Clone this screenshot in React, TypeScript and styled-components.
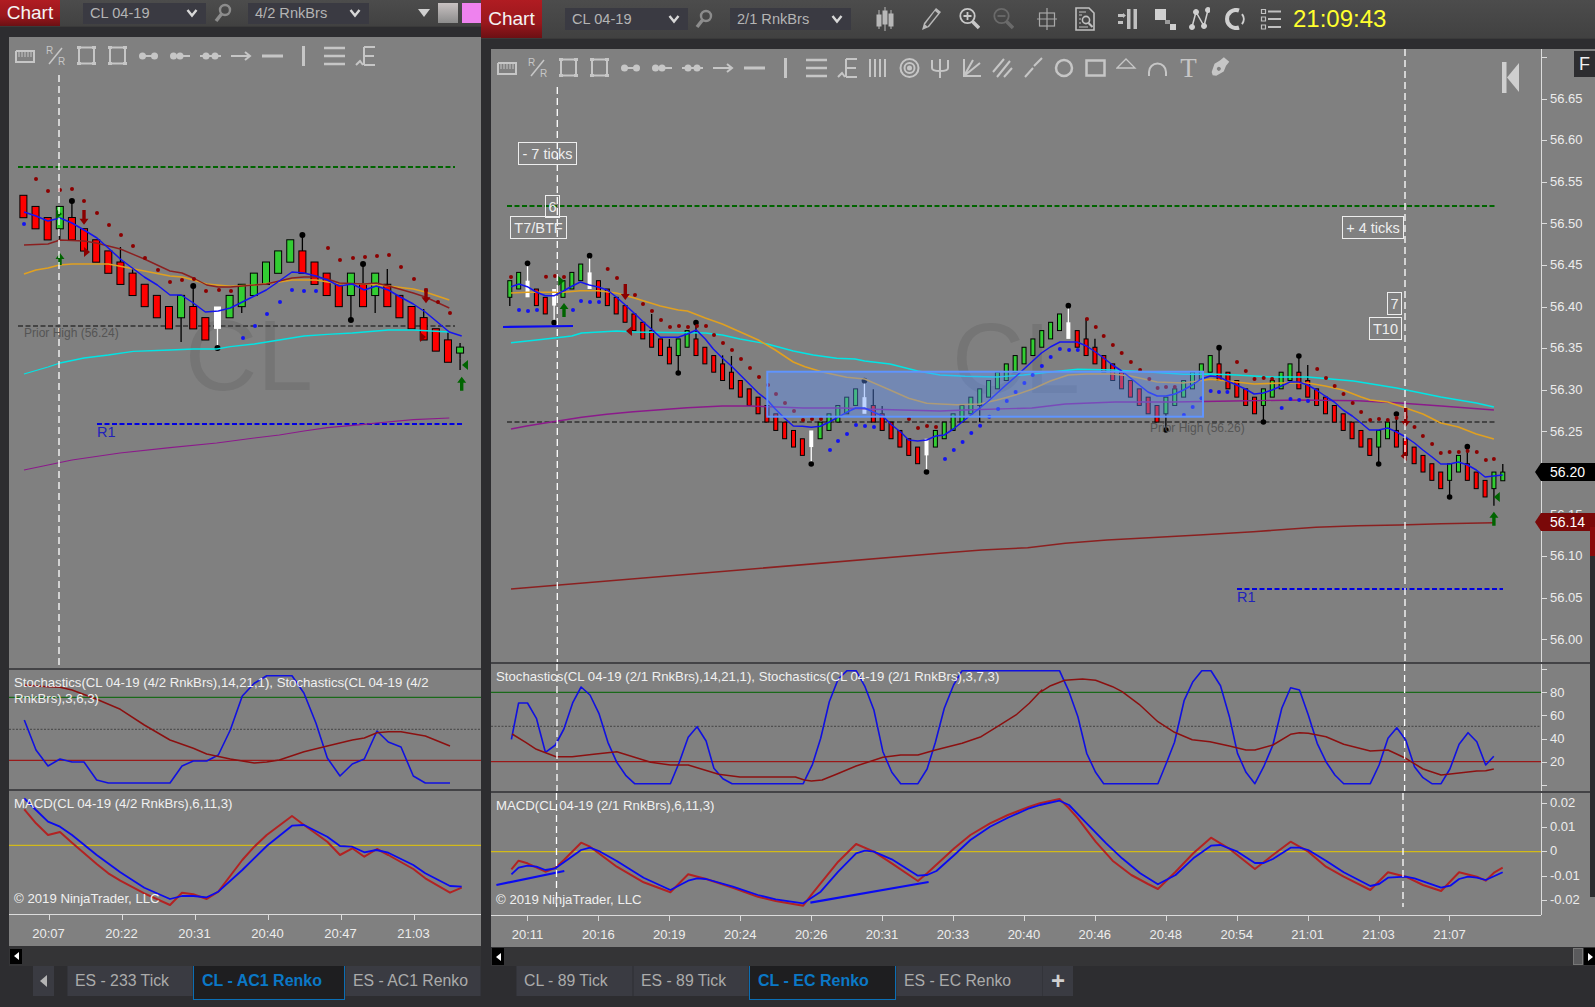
import React from 'react';
import styled, { createGlobalStyle } from 'styled-components';

const GlobalStyle = createGlobalStyle`
  html, body { margin: 0; padding: 0; background: #2d2d30; }
  body { font-family: "Liberation Sans", Arial, sans-serif; }
`;

/* ---------- chart data (all x/y are page pixels) ---------- */

// zoomed crops were read at different scales, this puts them back on the page
const pts = (flat: number[], ox: number, oy: number, sx: number) => {
  const out: string[] = [];
  for (let i = 0; i < flat.length; i += 2) {
    out.push(`${(ox + flat[i] / sx).toFixed(1)},${(oy + flat[i + 1] / 3).toFixed(1)}`);
  }
  return out;
};
const L = (f: number[]) => pts(f, 0, 150, 3);
const LS = (f: number[]) => pts(f, 0, 660, 3);
const R4 = (f: number[]) => pts(f, 490, 130, 3);
const R5 = (f: number[]) => pts(f, 940, 280, 2.394);
const R7 = (f: number[]) => pts(f, 490, 655, 2.8);
const R8 = (f: number[]) => pts(f, 1040, 655, 2.825);
const dotPts = (list: string[]) => list.map((p) => p.split(',').map(Number));

type Wick = [number, number, boolean?];
type CandleSet = {
  tops: number[];
  kinds: string;
  x: (i: number) => number;
  y: (t: number) => number;
  bodyH: number;
  halfW: number;
  wicks: Wick[];
  lastH: number;
  dotR: number;
};

const leftCandles: CandleSet = {
  tops: [0, 1, 2, 1, 2, 3, 4, 5, 6, 7, 8, 9, 10, 9, 10, 11, 10, 9, 8, 7, 6, 5, 4, 5, 6, 7, 8, 7, 8, 7, 8, 9, 10, 11, 12, 13, 13.65],
  kinds: 'rrrgrrrrrrrrrgrrwggggggrrrrgrgrrrrrrg',
  x: (i) => 23.4 + 12.13 * i,
  y: (t) => 195.3 + 11.12 * t,
  bodyH: 22.4,
  halfW: 3.5,
  lastH: 6,
  dotR: 3,
  wicks: [
    [3, 240], [4, 201, true], [8, 247], [9, 268], [13, 342], [14, 286, true], [16, 348, true], [18, 313],
    [23, 235, true], [27, 320, true], [28, 264, true], [29, 313], [30, 269], [33, 309], [35, 332], [36, 343], [36, 370],
  ],
};

const y4 = (v: number) => 130 + v / 3;
const y5 = (v: number) => 280 + v / 3;

const rightCandles: CandleSet = {
  tops: [
    0, -1, 0, 1, 2, 1, 0, -1, -2, -1, 0, 1, 2, 3, 4, 5, 6, 7, 8, 7, 6, 7, 8, 9, 10, 11, 12, 13, 14, 15, 16, 17, 18, 19, 18, 17, 16, 15, 14, 13,
    14, 15, 16, 17, 18, 19, 20, 19, 18, 17, 16, 15, 14, 13, 12, 11, 10, 9, 8, 7, 6, 5, 4, 5, 6, 7, 8, 9, 10, 11, 12, 13, 14, 15, 14, 13, 12, 11, 10, 9,
    10, 11, 12, 13, 14, 13, 12, 11, 10, 11, 12, 13, 14, 15, 16, 17, 18, 19, 18, 17, 18, 19, 20, 21, 22, 23, 22, 21, 22, 23, 24, 23, 23,
  ],
  kinds:
    'ggwrrwgggw' + 'r'.repeat(9) + 'gg' + 'r'.repeat(13) + 'wgggggwrrrrrrwg' + 'g'.repeat(14) + 'w' + 'r'.repeat(10) + 'g'.repeat(6) +
    'r'.repeat(5) + 'g'.repeat(4) + 'r'.repeat(9) + 'gg' + 'r'.repeat(6) + 'gg' + 'rrr' + 'gg',
  x: (i) => 509.8 + 8.866 * i,
  y: (t) => 280.7 + 8.32 * t,
  bodyH: 16.6,
  halfW: 2,
  lastH: 8.7,
  dotR: 2.8,
  wicks: [
    [0, y4(528)], [2, y4(400), true], [5, y4(578), true], [9, y4(377), true], [16, y4(552)], [18, y4(627)], [19, y4(729), true],
    [21, y4(578), true], [24, y4(676)], [25, y4(678)], [34, y4(1002), true], [40, y4(752), true], [41, y4(778)], [42, y4(828)], [47, y4(1026), true],
    [53, y5(426)], [63, y5(77), true], [65, y5(115)], [66, y5(176)], [74, y5(450), true], [80, y5(203), true], [85, y5(426), true],
    [89, y5(228), true], [90, y5(255)], [98, y5(552), true], [100, y5(402), true], [106, y5(651), true], [108, y5(500), true], [111, y5(677)], [112, y5(552)],
  ],
};

const leftLines = {
  blue: L([72, 186, 108, 198, 144, 213, 180, 204, 216, 219, 252, 240, 291, 264, 325, 294, 361, 327, 397, 354, 433, 381, 472, 405, 510, 435, 544, 435, 580, 459, 616, 486, 655, 483, 691, 474, 727, 456, 763, 438, 799, 420, 838, 393, 876, 366, 912, 369, 948, 378, 982, 390, 1018, 408, 1057, 402, 1093, 420, 1129, 408, 1165, 420, 1201, 441, 1240, 462, 1276, 486, 1312, 516, 1348, 546, 1385, 558]),
  maroon: L([72, 285, 144, 282, 180, 270, 252, 273, 289, 279, 361, 297, 433, 327, 510, 363, 546, 369, 580, 384, 620, 405, 655, 411, 691, 411, 727, 408, 799, 402, 838, 393, 876, 384, 912, 381, 948, 381, 982, 387, 1018, 399, 1093, 402, 1129, 399, 1165, 408, 1240, 429, 1276, 441, 1348, 474]),
  orange: L([72, 372, 108, 360, 144, 354, 178, 345, 216, 342, 325, 342, 361, 349, 433, 363, 510, 378, 546, 381, 580, 390, 620, 402, 691, 409, 763, 405, 838, 396, 876, 390, 948, 390, 1018, 402, 1093, 402, 1165, 408, 1240, 417, 1276, 426, 1348, 450]),
  cyan: L([72, 672, 144, 651, 180, 639, 252, 624, 325, 615, 400, 604, 510, 600, 580, 597, 650, 597, 691, 590, 763, 582, 838, 570, 912, 558, 982, 553, 1057, 549, 1129, 543, 1165, 540, 1240, 540, 1348, 546]),
  purple: L([72, 960, 144, 945, 216, 930, 360, 909, 510, 893, 650, 879, 763, 864, 838, 855, 912, 843, 982, 833, 1093, 823, 1129, 819, 1240, 809, 1348, 804]),
  redDots: L([108, 87, 144, 123, 180, 120, 216, 117, 252, 153, 291, 189, 327, 225, 363, 255, 399, 288, 435, 324, 474, 360, 510, 396, 546, 390, 582, 387, 618, 423, 657, 420, 693, 423, 984, 294, 1020, 330, 1059, 324, 1095, 321, 1131, 318, 1167, 315, 1203, 351, 1242, 387, 1278, 421, 1314, 456, 1350, 489]),
  blueDots: L([72, 222, 729, 564, 765, 528, 801, 492, 840, 456, 876, 420, 912, 423, 948, 423]),
};

const rightLines = {
  blue: [
    ...R4([63, 470, 87, 462, 112, 470, 139, 486, 166, 497, 193, 497, 220, 483, 247, 468, 271, 456, 298, 465, 325, 471, 352, 480, 379, 501, 406, 525, 433, 550, 457, 573, 484, 597, 511, 622, 565, 622, 592, 612, 619, 600, 646, 627, 670, 657, 697, 684, 724, 708, 751, 735, 778, 762, 805, 789, 832, 810, 856, 837, 883, 864, 910, 888, 937, 889, 964, 892, 991, 889, 1018, 876, 1043, 862, 1070, 847, 1097, 834, 1124, 834, 1151, 847, 1178, 858, 1205, 885, 1232, 906, 1256, 930, 1283, 933, 1310, 930, 1337, 918]),
    ...R5([10, 465, 32, 447, 53, 426, 74, 405, 95, 384, 116, 363, 137, 339, 158, 315, 180, 291, 201, 267, 222, 243, 243, 219, 264, 201, 287, 186, 307, 186, 328, 186, 351, 198, 372, 216, 392, 234, 413, 255, 435, 273, 456, 294, 477, 315, 498, 336, 520, 348, 541, 348, 562, 342, 583, 330, 604, 315, 625, 297, 647, 288, 668, 291, 688, 303, 710, 315, 731, 327, 752, 342, 774, 339, 795, 330, 817, 318, 838, 306, 859, 306, 880, 315, 901, 330, 922, 348, 944, 366, 965, 390, 987, 408, 1008, 429, 1028, 450, 1050, 450, 1072, 444, 1093, 456, 1115, 471, 1136, 489, 1156, 510, 1178, 531, 1199, 552, 1220, 552, 1241, 546, 1263, 555, 1284, 570, 1305, 591, 1325, 588, 1347, 585]),
  ],
  orange: [
    ...R4([63, 489, 112, 487, 220, 487, 271, 482, 325, 482, 379, 489, 433, 504, 511, 528, 565, 540, 592, 543, 646, 564, 697, 582, 751, 606, 805, 630, 856, 660, 910, 696, 945, 710, 1000, 727, 1070, 742, 1124, 747, 1200, 780, 1256, 805, 1310, 820]),
    ...R5([0, 372, 40, 374, 95, 372, 137, 360, 180, 345, 222, 327, 264, 303, 307, 285, 351, 282, 413, 282, 456, 288, 520, 306, 583, 309, 647, 298, 688, 303, 752, 312, 817, 309, 880, 309, 922, 318, 965, 330, 1008, 351, 1030, 360, 1072, 366, 1115, 384, 1156, 402, 1199, 429, 1241, 441, 1284, 462, 1326, 477]),
  ],
  cyan: [
    ...R4([63, 638, 140, 630, 220, 621, 245, 618, 275, 609, 380, 603, 430, 606, 646, 609, 697, 615, 750, 627, 832, 642, 910, 663, 970, 675, 1040, 685, 1095, 687, 1124, 693, 1200, 702, 1283, 723]),
    ...R5([0, 285, 60, 289, 137, 291, 200, 285, 264, 276, 330, 268, 413, 270, 500, 276, 583, 283, 647, 282, 710, 285, 795, 291, 880, 291, 990, 303, 1093, 324, 1199, 351, 1284, 369, 1326, 381]),
  ],
  purple: [
    ...R4([63, 897, 110, 888, 165, 879, 275, 862, 350, 853, 430, 845, 592, 833, 697, 828, 780, 828, 860, 831, 940, 834, 1060, 834, 1150, 838]),
    ...R5([0, 393, 60, 390, 220, 384, 300, 372, 420, 366, 560, 366, 700, 363, 860, 360, 1000, 362, 1100, 369, 1200, 378, 1326, 390]),
  ],
  maroon: ['511,589', ...R5([0, 820, 100, 810, 210, 803, 300, 790, 400, 780, 500, 773, 620, 765, 750, 755, 900, 742, 1000, 737, 1100, 735, 1200, 731, 1326, 728])],
  redDots: [
    ...R4([63, 441, 168, 440, 195, 438, 222, 441, 353, 417, 381, 444, 435, 495, 459, 522, 486, 543, 513, 570, 540, 591, 567, 588, 594, 591, 621, 588, 648, 588, 672, 615, 699, 639, 726, 660, 753, 687, 780, 714, 807, 741, 834, 765, 858, 792, 885, 819, 912, 843, 939, 870, 966, 867, 993, 867, 1257, 867, 1284, 894, 1311, 888, 1338, 891]),
    ...R5([352, 117, 373, 141, 392, 168, 414, 195, 435, 219, 457, 246, 479, 270, 501, 297, 521, 324, 541, 321, 562, 321, 711, 246, 732, 273, 753, 297, 775, 294, 795, 297, 903, 267, 924, 294, 945, 318, 966, 342, 988, 369, 1008, 396, 1030, 420, 1051, 417, 1072, 420, 1093, 414, 1115, 411, 1136, 441, 1156, 468, 1178, 492, 1199, 519, 1220, 516, 1242, 516, 1263, 513, 1285, 516, 1307, 540, 1326, 537]),
  ],
  blueDots: [
    ...R4([87, 540, 114, 543, 141, 540, 249, 540, 273, 513, 300, 516, 327, 516, 1020, 960, 1044, 933, 1071, 912, 1098, 885, 1125, 888, 1152, 891]),
    ...R5([12, 537, 33, 510, 54, 486, 75, 459, 96, 437, 118, 410, 139, 387, 160, 363, 181, 336, 202, 309, 222, 285, 244, 258, 265, 231, 287, 207, 309, 210, 330, 210, 584, 405, 605, 381, 626, 355, 648, 333, 668, 336, 688, 336, 818, 384, 839, 357, 860, 360, 881, 363]),
  ],
};

const leftStoch = {
  blue: LS([73, 180, 108, 270, 144, 318, 180, 297, 216, 306, 252, 306, 290, 360, 325, 369, 510, 369, 546, 318, 580, 303, 620, 303, 655, 285, 691, 210, 727, 108, 763, 70, 800, 47, 876, 47, 912, 100, 948, 190, 982, 294, 1020, 348, 1057, 312, 1093, 297, 1131, 213, 1165, 246, 1203, 261, 1240, 348, 1276, 369, 1350, 369]),
  maroon: LS([73, 75, 144, 80, 180, 82, 216, 90, 290, 118, 361, 148, 433, 195, 510, 240, 580, 265, 620, 282, 691, 297, 763, 309, 800, 306, 838, 300, 912, 275, 982, 258, 1057, 240, 1093, 234, 1131, 218, 1165, 215, 1203, 215, 1276, 228, 1350, 258]),
};
const leftMacd = {
  red: LS([73, 448, 108, 490, 144, 525, 180, 516, 216, 548, 290, 612, 325, 640, 361, 662, 433, 700, 510, 735, 546, 698, 580, 703, 620, 717, 655, 695, 727, 600, 763, 560, 800, 525, 876, 468, 912, 495, 982, 545, 1020, 585, 1057, 565, 1093, 590, 1131, 567, 1165, 585, 1240, 627, 1276, 655, 1350, 698, 1385, 683]),
  blue: LS([73, 415, 108, 450, 144, 485, 180, 500, 216, 525, 290, 585, 361, 637, 433, 683, 510, 717, 546, 708, 580, 708, 620, 712, 655, 695, 727, 630, 800, 558, 876, 497, 912, 495, 982, 530, 1020, 558, 1057, 560, 1093, 577, 1129, 570, 1165, 578, 1240, 615, 1276, 640, 1350, 678, 1385, 680]),
};
const rightStoch = {
  blue: [
    ...R7([60, 253, 80, 144, 105, 144, 130, 190, 155, 292, 183, 270, 207, 222, 232, 142, 255, 96, 280, 120, 305, 175, 330, 262, 355, 322, 380, 361, 405, 386, 505, 386, 530, 322, 555, 247, 580, 215, 605, 258, 627, 340, 652, 371, 678, 386, 877, 386, 903, 328, 926, 250, 950, 140, 975, 72, 1000, 47, 1025, 47, 1050, 95, 1075, 165, 1100, 290, 1125, 352, 1150, 386, 1198, 386, 1224, 342, 1247, 262, 1272, 160, 1298, 90, 1322, 47]),
    ...R8([55, 47, 82, 110, 107, 185, 132, 295, 157, 352, 180, 386, 333, 386, 358, 322, 380, 262, 407, 137, 432, 80, 457, 47, 483, 47, 510, 92, 535, 185, 558, 295, 582, 352, 607, 386, 632, 335, 658, 270, 683, 160, 708, 98, 733, 105, 758, 180, 783, 265, 808, 320, 833, 360, 858, 386, 933, 386, 958, 330, 983, 250, 1008, 218, 1033, 255, 1058, 335, 1082, 368, 1107, 386, 1133, 386, 1158, 342, 1184, 268, 1209, 233, 1234, 260, 1259, 330, 1282, 304]),
  ],
  maroon: [
    ...R7([62, 237, 100, 262, 130, 283, 185, 305, 230, 305, 290, 298, 355, 290, 450, 322, 505, 330, 555, 330, 640, 358, 700, 366, 855, 366, 880, 375, 900, 378, 930, 375, 970, 358, 1025, 333, 1100, 307, 1150, 300, 1198, 300, 1247, 285, 1322, 265, 1375, 245, 1425, 212, 1475, 178, 1510, 145, 1545, 105]),
    ...R8([0, 112, 30, 92, 70, 76, 120, 72, 157, 76, 205, 95, 232, 110, 280, 148, 333, 200, 380, 232, 430, 254, 480, 260, 535, 273, 582, 285, 607, 285, 658, 270, 708, 238, 733, 233, 758, 235, 808, 245, 858, 268, 933, 288, 983, 285, 1033, 310, 1082, 342, 1133, 360, 1159, 357, 1234, 348, 1259, 347, 1282, 342]),
  ],
};
const rightMacd = {
  red: [
    ...R7([60, 643, 80, 617, 105, 625, 155, 650, 183, 638, 207, 615, 255, 563, 280, 575, 355, 635, 430, 682, 505, 712, 555, 658, 605, 672, 680, 698, 750, 725, 800, 738, 877, 752, 903, 715, 975, 620, 1025, 567, 1075, 590, 1125, 625, 1198, 678, 1224, 655, 1300, 580, 1345, 540, 1400, 505, 1450, 480, 1510, 455]),
    ...R8([0, 445, 55, 432, 82, 460, 107, 490, 157, 560, 205, 617, 258, 660, 305, 687, 333, 702, 383, 650, 433, 595, 483, 548, 533, 580, 607, 642, 658, 600, 708, 560, 758, 590, 808, 635, 858, 665, 933, 705, 983, 652, 1033, 665, 1082, 690, 1133, 708, 1184, 652, 1234, 665, 1259, 677, 1284, 652, 1307, 638]),
  ],
  blue: [
    ...R7([60, 658, 80, 638, 105, 632, 130, 635, 155, 645, 183, 640, 207, 622, 255, 585, 280, 578, 305, 588, 355, 618, 430, 668, 505, 705, 555, 677, 580, 670, 605, 672, 680, 695, 750, 720, 800, 733, 877, 745, 926, 710, 975, 650, 1025, 595, 1050, 587, 1075, 590, 1125, 613, 1198, 662, 1224, 660, 1250, 648, 1300, 600, 1345, 555, 1400, 515, 1450, 488, 1510, 460]),
    ...R8([0, 450, 55, 437, 82, 450, 132, 505, 187, 565, 232, 610, 283, 655, 333, 688, 383, 660, 433, 610, 483, 572, 510, 570, 558, 590, 607, 624, 632, 624, 658, 612, 708, 578, 733, 578, 758, 585, 808, 617, 858, 652, 933, 693, 958, 687, 983, 668, 1033, 665, 1058, 670, 1133, 698, 1159, 692, 1184, 672, 1209, 665, 1234, 668, 1259, 675, 1307, 652]),
  ],
};

/* ---------- layout ---------- */

const Page = styled.div`
  display: flex;
  width: 1595px;
  height: 1007px;
  overflow: hidden;
  background: #2d2d30;
`;

const ChartWindow = styled.div<{ $w: number }>`
  display: flex;
  flex-direction: column;
  flex: 0 0 ${(p) => p.$w}px;
  min-width: 0;
`;

const TitleBar = styled.div<{ $h: number; $gap: number }>`
  display: flex;
  align-items: center;
  flex: 0 0 auto;
  height: ${(p) => p.$h}px;
  margin-bottom: ${(p) => p.$gap}px;
  background: linear-gradient(#4c4c4c, #414141);
  border-bottom: 1px solid #3a3a3a;
  box-sizing: border-box;
  overflow: hidden;
`;

const ChartButton = styled.div<{ $w: number; $ml: number }>`
  display: flex;
  align-items: center;
  justify-content: center;
  flex: 0 0 ${(p) => p.$w}px;
  height: 100%;
  margin-right: ${(p) => p.$ml}px;
  background: linear-gradient(#b01c22, #9a171c 60%, #6c1014);
  color: #f4f4f4;
  font-size: 19px;
`;

const SymbolSelect = styled.div<{ $w: number; $h: number }>`
  display: flex;
  align-items: center;
  justify-content: space-between;
  flex: 0 0 ${(p) => p.$w}px;
  height: ${(p) => p.$h}px;
  padding: 0 8px 0 7px;
  box-sizing: border-box;
  background: #3a3a42;
  color: #b4b4b4;
  font-size: 14.6px;
`;

const TitleIcon = styled.svg<{ $ml?: number; $mr?: number }>`
  flex: 0 0 auto;
  margin-left: ${(p) => p.$ml ?? 0}px;
  margin-right: ${(p) => p.$mr ?? 0}px;
`;

const Swatch = styled.div<{ $bg: string; $ml: number; $w: number }>`
  flex: 0 0 ${(p) => p.$w}px;
  height: 20px;
  margin-left: ${(p) => p.$ml}px;
  background: ${(p) => p.$bg};
`;

const Clock = styled.div`
  margin-left: 12px;
  color: #ffff2e;
  font-size: 24px;
`;

const ChartStack = styled.div<{ $ml: number }>`
  position: relative;
  display: flex;
  flex-direction: column;
  margin-left: ${(p) => p.$ml}px;
`;

const Pane = styled.div<{ $h: number }>`
  position: relative;
  display: flex;
  flex: 0 0 ${(p) => p.$h}px;
  height: ${(p) => p.$h}px;
  background: #808080;
  overflow: hidden;
`;

const Separator = styled.div`
  flex: 0 0 2px;
  background: #434346;
`;

const Plot = styled.div`
  position: relative;
  flex: 1;
  min-width: 0;
`;

const ChartSvg = styled.svg`
  position: relative;
  z-index: 1;
  display: block;
`;

const Watermark = styled.div<{ $x: number; $y: number }>`
  position: absolute;
  left: ${(p) => p.$x}px;
  top: ${(p) => p.$y}px;
  font-size: 100px;
  line-height: 100px;
  color: #757575;
`;

const Tag = styled.div<{ $x: number; $y: number; $w: number }>`
  position: absolute;
  z-index: 2;
  left: ${(p) => p.$x}px;
  top: ${(p) => p.$y}px;
  width: ${(p) => p.$w}px;
  height: 23px;
  box-sizing: border-box;
  border: 1px solid #eeeeee;
  color: #eeeeee;
  font-size: 14.5px;
  line-height: 22px;
  text-align: center;
  white-space: nowrap;
`;

const ChartNote = styled.div<{ $x: number; $y: number; $c: string; $size: number }>`
  position: absolute;
  z-index: 2;
  left: ${(p) => p.$x}px;
  top: ${(p) => p.$y}px;
  color: ${(p) => p.$c};
  font-size: ${(p) => p.$size}px;
  line-height: 16px;
  white-space: nowrap;
`;

const Legend = styled.div<{ $y: number; $w?: number }>`
  position: absolute;
  z-index: 2;
  left: 5px;
  top: ${(p) => p.$y}px;
  width: ${(p) => (p.$w ? `${p.$w}px` : 'auto')};
  color: #f0f0f0;
  font-size: 13.2px;
  line-height: 16px;
  white-space: ${(p) => (p.$w ? 'normal' : 'nowrap')};
`;

const Toolbar = styled.div`
  position: absolute;
  z-index: 2;
  top: 8px;
  left: 5px;
  display: flex;
  gap: 10px;
`;

const ToolIcon = styled.svg`
  display: block;
  flex: 0 0 21px;
  fill: none;
  stroke: #c6c6c6;
  stroke-width: 2;
`;

const ToolGlyph = styled.div`
  flex: 0 0 21px;
  width: 21px;
  height: 21px;
  color: #c6c6c6;
  font-family: "Liberation Serif", serif;
  font-size: 27px;
  line-height: 22px;
  text-align: center;
`;

const CollapseIcon = styled.svg`
  position: absolute;
  z-index: 2;
  left: 1011px;
  top: 13px;
`;

const ValueAxis = styled.div`
  position: relative;
  z-index: 1;
  display: flex;
  flex-direction: column;
  flex: 0 0 54px;
  box-sizing: border-box;
  border-left: 1px solid #dcdcdc;
`;

const AxisRow = styled.div<{ $h: number; $mt?: number }>`
  position: relative;
  flex: 0 0 ${(p) => p.$h}px;
  margin-top: ${(p) => p.$mt ?? 0}px;
  padding-left: 8px;
  color: #ececec;
  font-size: 13px;
  line-height: ${(p) => p.$h}px;
  &::before {
    content: '';
    position: absolute;
    left: 0;
    top: 50%;
    width: 5px;
    height: 1px;
    background: #dcdcdc;
  }
`;

const PriceFlag = styled.div<{ $bg: string; $y: number }>`
  position: absolute;
  z-index: 3;
  right: 0;
  top: ${(p) => p.$y}px;
  width: 60px;
  height: 18px;
  padding-left: 15px;
  box-sizing: border-box;
  background: ${(p) => p.$bg};
  color: #ffffff;
  font-size: 14px;
  line-height: 18px;
  clip-path: polygon(0 50%, 6px 0, 100% 0, 100% 100%, 6px 100%);
`;

const FButton = styled.div`
  position: absolute;
  z-index: 3;
  right: 0;
  top: 2px;
  width: 21px;
  height: 26px;
  background: #2d2d30;
  color: #f0f0f0;
  font-size: 18px;
  line-height: 26px;
  text-align: center;
`;

const RightStrip = styled.div`
  position: absolute;
  z-index: 4;
  right: 0;
  top: 478px;
  width: 5px;
  height: 370px;
  background: linear-gradient(#8a0a0a 0, #8a0a0a 29px, #2d2d30 29px);
`;

const TimeRow = styled.div<{ $h: number }>`
  display: flex;
  flex: 0 0 ${(p) => p.$h}px;
  height: ${(p) => p.$h}px;
  background: #808080;
`;

const TimeAxis = styled.div<{ $pad: number }>`
  display: flex;
  flex: 1;
  min-width: 0;
  box-sizing: border-box;
  border-top: 1px solid #dcdcdc;
  padding-left: ${(p) => p.$pad}px;
  overflow: hidden;
`;

const TimeCell = styled.div<{ $w: number }>`
  position: relative;
  flex: 0 0 ${(p) => p.$w}px;
  padding-top: 11px;
  color: #ececec;
  font-size: 13px;
  line-height: 16px;
  text-align: center;
  &::before {
    content: '';
    position: absolute;
    left: 50%;
    top: 0;
    width: 1px;
    height: 5px;
    background: #dcdcdc;
  }
`;

const AxisCorner = styled.div`
  flex: 0 0 54px;
`;

const ScrollRow = styled.div<{ $h: number }>`
  display: flex;
  justify-content: space-between;
  align-items: center;
  height: ${(p) => p.$h}px;
  background: #343436;
`;

const ScrollEnd = styled.div<{ $w: number; $dir: 'left' | 'right'; $h: number }>`
  position: relative;
  flex: 0 0 ${(p) => p.$w}px;
  height: ${(p) => p.$h}px;
  margin-left: 1px;
  background: #000000;
  &::after {
    content: '';
    position: absolute;
    top: calc(50% - 4px);
    left: calc(50% - 2px);
    border: 4px solid transparent;
    border-left-width: ${(p) => (p.$dir === 'right' ? 5 : 0)}px;
    border-right-width: ${(p) => (p.$dir === 'left' ? 5 : 0)}px;
    border-left-color: #ffffff;
    border-right-color: #ffffff;
  }
`;

const ScrollThumb = styled.div`
  flex: 0 0 10px;
  height: 17px;
  margin-left: auto;
  background: #5a5a5c;
  border: 1px solid #777;
  box-sizing: border-box;
`;

const TabStrip = styled.div<{ $pad: number }>`
  display: flex;
  align-items: flex-start;
  padding-left: ${(p) => p.$pad}px;
  overflow: hidden;
`;

const Tab = styled.div<{ $w: number; $active?: boolean }>`
  flex: 0 0 ${(p) => p.$w}px;
  height: ${(p) => (p.$active ? 34 : 30)}px;
  box-sizing: border-box;
  padding-left: ${(p) => (p.$active ? 8 : 7)}px;
  font-size: ${(p) => (p.$active ? 16 : 15.8)}px;
  font-weight: ${(p) => (p.$active ? 700 : 400)};
  line-height: 30px;
  white-space: nowrap;
  overflow: hidden;
  background: ${(p) => (p.$active ? '#1e1e20' : '#3a3b42')};
  color: ${(p) => (p.$active ? '#0b78c6' : '#ababab')};
  border-left: 1px solid ${(p) => (p.$active ? '#0b6eb4' : '#33343a')};
  border-right: 1px solid ${(p) => (p.$active ? '#0b6eb4' : '#33343a')};
  border-bottom: ${(p) => (p.$active ? '1px solid #0b6eb4' : 'none')};
`;

const TabButton = styled.div<{ $w: number; $mr: number }>`
  display: flex;
  align-items: center;
  justify-content: center;
  flex: 0 0 ${(p) => p.$w}px;
  height: 30px;
  margin-right: ${(p) => p.$mr}px;
  background: #3a3b42;
  color: #d0d0d0;
  font-size: 24px;
  font-weight: 700;
`;

const LeftCaret = styled.div`
  border: 6px solid transparent;
  border-left: 0;
  border-right: 7px solid #b4b4b4;
`;

const Trace = styled.polyline<{ $c: string; $w: number }>`
  fill: none;
  stroke: ${(p) => p.$c};
  stroke-width: ${(p) => p.$w}px;
  stroke-linejoin: round;
`;

const GuideLine = styled.line<{ $c: string; $w: number; $dash?: string }>`
  stroke: ${(p) => p.$c};
  stroke-width: ${(p) => p.$w}px;
  stroke-dasharray: ${(p) => p.$dash ?? 'none'};
`;

const Zone = styled.rect`
  fill: rgba(95, 148, 255, 0.4);
  stroke: #5f94ff;
  stroke-width: 2px;
`;

/* ---------- drawing helpers ---------- */

const Candles: React.FC<{ set: CandleSet }> = ({ set }) => {
  const last = set.tops.length - 1;
  const colour = (k: string) => (k === 'r' ? '#ff0000' : k === 'g' ? '#32cd32' : '#ffffff');
  return (
    <g>
      {set.wicks.map(([i, end, dot], n) => {
        const top = set.y(set.tops[i]);
        const x = set.x(i);
        return (
          <g key={n}>
            <line x1={x} x2={x} y1={top + set.bodyH / 2} y2={end} stroke={set.kinds[i] === 'w' ? '#ffffff' : '#000000'} strokeWidth={1.3} />
            {dot && <circle cx={x} cy={end} r={set.dotR} fill="#000000" />}
          </g>
        );
      })}
      {set.tops.map((t, i) => (
        <rect
          key={i}
          x={set.x(i) - set.halfW}
          y={set.y(t)}
          width={set.halfW * 2}
          height={i === last ? set.lastH : set.bodyH}
          fill={colour(set.kinds[i])}
          stroke={set.kinds[i] === 'w' ? 'none' : '#000000'}
          strokeWidth={1}
        />
      ))}
    </g>
  );
};

const Dots: React.FC<{ list: string[]; c: string; r: number }> = ({ list, c, r }) => (
  <g fill={c}>
    {dotPts(list).map(([x, y], i) => (
      <circle key={i} cx={x} cy={y} r={r} />
    ))}
  </g>
);

const Arrow: React.FC<{ x: number; tail: number; tip: number; c: string }> = ({ x, tail, tip, c }) => {
  const d = tip > tail ? -1 : 1;
  const neck = tip + d * 6;
  return <polygon fill={c} points={`${x},${tip} ${x + 4.5},${neck} ${x + 1.7},${neck} ${x + 1.7},${tail} ${x - 1.7},${tail} ${x - 1.7},${neck} ${x - 4.5},${neck}`} />;
};

const Wedge: React.FC<{ x: number; y: number; c: string; dir: 1 | -1 }> = ({ x, y, c, dir }) => (
  <polygon fill={c} points={`${x + dir * 3},${y} ${x - dir * 3},${y - 5} ${x - dir * 3},${y + 5}`} />
);

const tools: React.ReactNode[] = [
  <g key="ruler"><path d="M2 6v11h18V6H2" /><path strokeWidth="1" d="M5 7v5M8 7v5M11 7v5M14 7v5M17 7v5" /></g>,
  <g key="rr"><path strokeWidth="1.5" d="M17 3L4 19" /><text x="1" y="9" fontSize="10" fill="#c6c6c6" stroke="none" fontFamily="Liberation Sans">R</text><text x="13" y="20" fontSize="10" fill="#c6c6c6" stroke="none" fontFamily="Liberation Sans">R</text></g>,
  <g key="box"><rect x="3" y="2.5" width="15" height="16" /><path fill="#c6c6c6" stroke="none" d="M1 1h4v3H1zM16 1h4v3h-4zM1 17h4v3H1zM16 17h4v3h-4z" /></g>,
  <g key="box2"><rect x="3" y="2.5" width="15" height="16" /><path fill="#c6c6c6" stroke="none" d="M1 1h4v3H1zM16 1h4v3h-4zM1 17h4v3H1zM16 17h4v3h-4z" /></g>,
  <g key="seg"><circle cx="4.5" cy="11" r="3.5" fill="#c6c6c6" stroke="none" /><circle cx="16.5" cy="11" r="3.5" fill="#c6c6c6" stroke="none" /><path d="M4 11h13" /></g>,
  <g key="ray"><circle cx="4.5" cy="11" r="3.5" fill="#c6c6c6" stroke="none" /><circle cx="11" cy="11" r="3.5" fill="#c6c6c6" stroke="none" /><path d="M4 11h17" /></g>,
  <g key="ext"><circle cx="6" cy="11" r="3.5" fill="#c6c6c6" stroke="none" /><circle cx="15" cy="11" r="3.5" fill="#c6c6c6" stroke="none" /><path d="M0 11h21" /></g>,
  <g key="arrow"><path d="M0 11h19M14 7l5 4-5 4" /></g>,
  <path key="hline" strokeWidth="3" d="M0 11h21" />,
  <path key="vline" strokeWidth="3" d="M10.5 1v20" />,
  <path key="bars" strokeWidth="2.5" d="M0 3h21M0 11h21M0 19h21" />,
  <g key="fib"><path d="M9 2v18M9 2h11M9 11h10M9 20h11" /><path d="M1 20l4-4 3 4" /></g>,
  <path key="cycles" strokeWidth="2" d="M2 2v18M7 2v18M12 2v18M17 2v18" />,
  <g key="target"><circle cx="10.5" cy="11" r="9" /><circle cx="10.5" cy="11" r="5" /><circle cx="10.5" cy="11" r="1.5" fill="#c6c6c6" /></g>,
  <path key="fork" d="M10 21V2M2 3v8q0 3 8 3t8-3V3" />,
  <path key="fan" d="M3 2v17h17M3 19L19 6M3 19L12 3" />,
  <path key="stripes" d="M1 15L12 2M5 20L18 4M12 20L20 11" />,
  <path key="channel" d="M2 20l8-9M11 9l8-8" />,
  <circle key="ellipse" cx="10" cy="11" r="8" strokeWidth="2.5" />,
  <rect key="rect" x="1.5" y="3.5" width="18" height="15" strokeWidth="2.5" />,
  <path key="tri" strokeWidth="1.3" d="M1 11L10 2l9 9z" />,
  <path key="arc" d="M2 19V15a8.5 8.5 0 0 1 17 0v4" />,
  'T',
  <g key="marker" transform="rotate(40 10.5 11)"><path fill="#c6c6c6" stroke="none" d="M7 0h7v5l2 6-3 8-3 2-3-2-3-8 2-6z" /><circle cx="10.5" cy="12" r="2" fill="#808080" stroke="none" /></g>,
];

const Tools: React.FC<{ count: number }> = ({ count }) => (
  <Toolbar>
    {tools.slice(0, count).map((t, i) =>
      typeof t === 'string' ? (
        <ToolGlyph key={i}>{t}</ToolGlyph>
      ) : (
        <ToolIcon key={i} width={21} height={21} viewBox="0 0 21 21">{t}</ToolIcon>
      ),
    )}
  </Toolbar>
);

const Chevron: React.FC = () => (
  <svg width="12" height="10" viewBox="0 0 12 10"><path d="M1.5 2L6 7.5 10.5 2" fill="none" stroke="#d8d8d8" strokeWidth="2.4" /></svg>
);

const SearchGlass: React.FC<{ ml: number; mr: number }> = ({ ml, mr }) => (
  <TitleIcon $ml={ml} $mr={mr} width="18" height="20" viewBox="0 0 18 20" fill="none" stroke="#8c8c8c">
    <circle cx="11" cy="7" r="5" strokeWidth="2.4" />
    <path d="M7.5 11L2 18" strokeWidth="3.5" />
  </TitleIcon>
);

const MagnifyPlus: React.FC<{ ml: number; c: string; plus?: boolean }> = ({ ml, c, plus }) => (
  <TitleIcon $ml={ml} width="21" height="24" viewBox="0 0 21 24" fill="none" stroke={c}>
    <circle cx="8.5" cy="9" r="7.2" strokeWidth="1.8" />
    <path strokeWidth="1.8" d={plus ? 'M4.5 9h8M8.5 5v8' : 'M4.5 9h8'} />
    <path strokeWidth="3.5" d="M13.5 14.5L20 21" />
  </TitleIcon>
);

const ChartHeaderIcons: React.FC = () => (
  <>
    <TitleIcon $ml={25} width="18" height="26" viewBox="0 0 18 26" fill="#b8b8b8" stroke="#b8b8b8">
      <path d="M3 4v19M9 1v24M15 4v19" strokeWidth="1" />
      <rect x="1" y="9" width="4" height="11" /><rect x="7" y="5" width="4" height="13" /><rect x="13" y="8" width="4" height="12" />
    </TitleIcon>
    <TitleIcon $ml={27} width="21" height="24" viewBox="0 0 21 24" fill="#b8b8b8">
      <path d="M15 1l5 4-12 15-7 3 2-7z" /><path d="M14 4l3 2.5L6.5 19.5l-2.5-2z" fill="#4a4a4a" />
    </TitleIcon>
    <MagnifyPlus ml={17} c="#c8c8c8" plus />
    <MagnifyPlus ml={13} c="#6a6a6a" />
    <TitleIcon $ml={23} width="20" height="22" viewBox="0 0 20 22" fill="none" stroke="#a8a8a8" strokeWidth="1.2">
      <rect x="2.5" y="5" width="15" height="13" /><path d="M10 0v22M0 11h20" />
    </TitleIcon>
    <TitleIcon $ml={17} width="22" height="24" viewBox="0 0 22 24" fill="none" stroke="#c0c0c0" strokeWidth="1.6">
      <path d="M2 1h13l5 5v17H2z" /><path d="M5 5h7M5 8h3M5 12h2M5 16h2M5 20h9" strokeWidth="1.2" /><circle cx="12" cy="13" r="3.6" /><path d="M14.5 16l4 4" strokeWidth="2.2" />
    </TitleIcon>
    <TitleIcon $ml={21} width="21" height="22" viewBox="0 0 21 22" fill="#c0c0c0">
      <rect x="10" y="1" width="3.5" height="20" /><rect x="16.5" y="1" width="3.5" height="20" /><rect x="1" y="6" width="5" height="3" /><rect x="1" y="13" width="5" height="3" /><path d="M6 5l3 2.5L6 10z" />
    </TitleIcon>
    <TitleIcon $ml={17} width="21" height="24" viewBox="0 0 21 24" fill="#d0d0d0">
      <rect x="0" y="2" width="11" height="11" /><rect x="10" y="13" width="5" height="4" fill="#9a9a9a" /><rect x="15" y="17" width="6" height="6" />
    </TitleIcon>
    <TitleIcon $ml={13} width="21" height="24" viewBox="0 0 21 24" fill="#d0d0d0" stroke="#d0d0d0">
      <path d="M3 20L7 5l8 14 4-16" fill="none" strokeWidth="1.5" /><circle cx="3" cy="20" r="2.5" /><circle cx="7" cy="5" r="2.5" /><circle cx="15" cy="19" r="2.5" /><circle cx="19" cy="3" r="2.5" />
    </TitleIcon>
    <TitleIcon $ml={15} width="21" height="22" viewBox="0 0 21 22" fill="none" stroke="#d0d0d0">
      <path d="M14 2.5A9 9 0 1 0 14 19.5" strokeWidth="4" /><path d="M17 6a8 8 0 0 1 0 10" strokeWidth="2" />
    </TitleIcon>
    <TitleIcon $ml={14} width="21" height="24" viewBox="0 0 21 24" fill="none" stroke="#c0c0c0">
      <path d="M1.5 2.5h4v4h-4zM1.5 10h4v4h-4zM1.5 18h4v4h-4z" strokeWidth="1.2" /><path d="M8 4.5h13M8 12h13M8 20h13" strokeWidth="2" />
    </TitleIcon>
  </>
);

const prices = ['56.65', '56.60', '56.55', '56.50', '56.45', '56.40', '56.35', '56.30', '56.25', '56.20', '56.15', '56.10', '56.05', '56.00'];
const leftTimes = ['20:07', '20:22', '20:31', '20:40', '20:47', '21:03'];
const rightTimes = ['20:11', '20:16', '20:19', '20:24', '20:26', '20:31', '20:33', '20:40', '20:46', '20:48', '20:54', '21:01', '21:03', '21:07'];

const LeftChart: React.FC = () => (
  <ChartWindow $w={481}>
    <TitleBar $h={27} $gap={10}>
      <ChartButton $w={60} $ml={23}>Chart</ChartButton>
      <SymbolSelect $w={123} $h={21}>CL 04-19<Chevron /></SymbolSelect>
      <SearchGlass ml={8} mr={16} />
      <SymbolSelect $w={121} $h={21}>4/2 RnkBrs<Chevron /></SymbolSelect>
      <TitleIcon $ml={49} width="12" height="8" viewBox="0 0 12 8"><path d="M0 0h12L6 8z" fill="#d0d0d0" /></TitleIcon>
      <Swatch $bg="linear-gradient(#c8c2c2, #8c8c8c)" $ml={8} $w={20} />
      <Swatch $bg="#ee82ee" $ml={4} $w={19} />
    </TitleBar>
    <ChartStack $ml={9}>
      <Pane $h={631}>
        <Plot>
          <Watermark $x={176} $y={268}>CL</Watermark>
          <Tools count={12} />
          <ChartSvg width={472} height={631} viewBox="9 37 472 631">
            <GuideLine x1={18} x2={455} y1={167} y2={167} $c="#006400" $w={2} $dash="5 2.5" />
            <GuideLine x1={18} x2={455} y1={326} y2={326} $c="#444444" $w={2} $dash="5 2.5" />
            <GuideLine x1={97} x2={462} y1={424} y2={424} $c="#0000e0" $w={2} $dash="5 2.5" />
            <Candles set={leftCandles} />
            <Trace points={leftLines.purple.join(' ')} $c="#8b1a8b" $w={1.2} />
            <Trace points={leftLines.cyan.join(' ')} $c="#00e5e5" $w={1.3} />
            <Trace points={leftLines.orange.join(' ')} $c="#e0a020" $w={1.6} />
            <Trace points={leftLines.maroon.join(' ')} $c="#8b2020" $w={1.4} />
            <Trace points={leftLines.blue.join(' ')} $c="#1414f0" $w={1.5} />
            <Dots list={leftLines.redDots} c="#8b0000" r={2} />
            <Dots list={leftLines.blueDots} c="#1414f0" r={2} />
            <Arrow x={84} tail={210} tip={224.7} c="#8b0000" />
            <Arrow x={60} tail={265} tip={253} c="#006400" />
            <Arrow x={426} tail={288.3} tip={303.3} c="#8b0000" />
            <Arrow x={461.7} tail={390.7} tip={376.7} c="#006400" />
            <Wedge x={87} y={252} c="#8b0000" dir={1} />
            <Wedge x={423} y={337} c="#8b0000" dir={1} />
            <Wedge x={465} y={365} c="#006400" dir={-1} />
            <Wedge x={59} y={214} c="#006400" dir={1} />
            <GuideLine x1={59} x2={59} y1={75} y2={668} $c="#ffffff" $w={1.3} $dash="7 4" />
          </ChartSvg>
          <ChartNote $x={15} $y={288} $c="#555555" $size={12}>Prior High (56.24)</ChartNote>
          <ChartNote $x={88} $y={387} $c="#2222bb" $size={14.5}>R1</ChartNote>
        </Plot>
      </Pane>
      <Separator />
      <Pane $h={119}>
        <Plot>
          <Legend $y={5} $w={440}>Stochastics(CL 04-19 (4/2 RnkBrs),14,21,1), Stochastics(CL 04-19 (4/2 RnkBrs),3,6,3)</Legend>
          <ChartSvg width={472} height={119} viewBox="9 670 472 119">
            <GuideLine x1={9} x2={481} y1={697.3} y2={697.3} $c="#006400" $w={1} />
            <GuideLine x1={9} x2={481} y1={729.3} y2={729.3} $c="#444444" $w={1} $dash="2 1.5" />
            <GuideLine x1={9} x2={481} y1={760.3} y2={760.3} $c="#a00000" $w={1} />
            <Trace points={leftStoch.blue.join(' ')} $c="#1010e0" $w={1.6} />
            <Trace points={leftStoch.maroon.join(' ')} $c="#8b1010" $w={1.5} />
          </ChartSvg>
        </Plot>
      </Pane>
      <Separator />
      <Pane $h={123}>
        <Plot>
          <Legend $y={5}>MACD(CL 04-19 (4/2 RnkBrs),6,11,3)</Legend>
          <ChartSvg width={472} height={123} viewBox="9 791 472 123">
            <GuideLine x1={9} x2={481} y1={845.3} y2={845.3} $c="#e6c800" $w={1} />
            <Trace points={leftMacd.red.join(' ')} $c="#b22222" $w={2} />
            <Trace points={leftMacd.blue.join(' ')} $c="#0a0af0" $w={1.8} />
          </ChartSvg>
          <Legend $y={100}>© 2019 NinjaTrader, LLC</Legend>
        </Plot>
      </Pane>
      <TimeRow $h={32}>
        <TimeAxis $pad={3}>
          {leftTimes.map((t) => (
            <TimeCell key={t} $w={73}>{t}</TimeCell>
          ))}
        </TimeAxis>
      </TimeRow>
      <ScrollRow $h={20}>
        <ScrollEnd $w={12} $h={15} $dir="left" />
      </ScrollRow>
    </ChartStack>
    <TabStrip $pad={33}>
      <TabButton $w={21} $mr={13}><LeftCaret /></TabButton>
      <Tab $w={126}>ES - 233 Tick</Tab>
      <Tab $w={152} $active>CL - AC1 Renko</Tab>
      <Tab $w={136}>ES - AC1 Renko</Tab>
    </TabStrip>
  </ChartWindow>
);

const RightChart: React.FC = () => (
  <ChartWindow $w={1114}>
    <TitleBar $h={39} $gap={10}>
      <ChartButton $w={61} $ml={23}>Chart</ChartButton>
      <SymbolSelect $w={123} $h={22}>CL 04-19<Chevron /></SymbolSelect>
      <SearchGlass ml={7} mr={17} />
      <SymbolSelect $w={121} $h={22}>2/1 RnkBrs<Chevron /></SymbolSelect>
      <ChartHeaderIcons />
      <Clock>21:09:43</Clock>
    </TitleBar>
    <ChartStack $ml={10}>
      <RightStrip />
      <Pane $h={613}>
        <Plot>
          <Watermark $x={461} $y={259}>CL</Watermark>
          <Tools count={24} />
          <CollapseIcon width="17" height="31" viewBox="0 0 17 31">
            <rect x="0" y="0" width="4.5" height="31" fill="#cfcfcf" />
            <path d="M17 1v29L5 15.5z" fill="#cfcfcf" />
          </CollapseIcon>
          <ChartSvg width={1050} height={613} viewBox="491 49 1050 613">
            <GuideLine x1={507} x2={1495} y1={206} y2={206} $c="#006400" $w={2} $dash="5 2.5" />
            <GuideLine x1={507} x2={1495} y1={422} y2={422} $c="#444444" $w={2} $dash="5 2.5" />
            <GuideLine x1={1237} x2={1503} y1={589} y2={589} $c="#0000e0" $w={2} $dash="5 2.5" />
            <Candles set={rightCandles} />
            <Trace points={rightLines.maroon.join(' ')} $c="#8b2020" $w={1.6} />
            <Trace points={rightLines.purple.join(' ')} $c="#8b1a8b" $w={1.4} />
            <Trace points={rightLines.cyan.join(' ')} $c="#00e5e5" $w={1.4} />
            <Trace points={rightLines.orange.join(' ')} $c="#e0a020" $w={1.6} />
            <Trace points={rightLines.blue.join(' ')} $c="#1414f0" $w={1.5} />
            <Dots list={rightLines.redDots} c="#8b0000" r={2} />
            <Dots list={rightLines.blueDots} c="#1414f0" r={2} />
            <line x1={503} y1={327} x2={573} y2={326} stroke="#0a0af0" strokeWidth={2.2} />
            <Arrow x={625.3} tail={284} tip={300} c="#8b0000" />
            <Arrow x={564} tail={317} tip={303} c="#006400" />
            <Arrow x={1405.7} tail={408} tip={427} c="#8b0000" />
            <Arrow x={1493.9} tail={525.7} tip={511.7} c="#006400" />
            <Wedge x={561.3} y={281} c="#006400" dir={1} />
            <Wedge x={629} y={331} c="#8b0000" dir={-1} />
            <Wedge x={1403.6} y={456} c="#8b0000" dir={-1} />
            <Wedge x={1496.8} y={497} c="#006400" dir={-1} />
            <Zone x={767.3} y={371.7} width={435.7} height={45} />
            <GuideLine x1={557.3} x2={557.3} y1={87} y2={662} $c="#ffffff" $w={1.3} $dash="7 4" />
            <GuideLine x1={1405} x2={1405} y1={49} y2={662} $c="#ffffff" $w={1.3} $dash="7 4" />
          </ChartSvg>
          <Tag $x={27} $y={93} $w={59}>- 7 ticks</Tag>
          <Tag $x={54} $y={146} $w={15}>6</Tag>
          <Tag $x={19} $y={167} $w={57}>T7/BTF</Tag>
          <Tag $x={851} $y={167} $w={62}>+ 4 ticks</Tag>
          <Tag $x={896} $y={243} $w={15}>7</Tag>
          <Tag $x={878} $y={268} $w={33}>T10</Tag>
          <ChartNote $x={659} $y={371} $c="#555555" $size={12}>Prior High (56.26)</ChartNote>
          <ChartNote $x={746} $y={540} $c="#2222bb" $size={14.5}>R1</ChartNote>
        </Plot>
        <ValueAxis>
          <AxisRow $h={41.6} $mt={-12.8} />
          {prices.map((p) => (
            <AxisRow key={p} $h={41.6}>{p}</AxisRow>
          ))}
        </ValueAxis>
        <FButton>F</FButton>
        <PriceFlag $bg="#000000" $y={414}>56.20</PriceFlag>
        <PriceFlag $bg="#7a0808" $y={464}>56.14</PriceFlag>
      </Pane>
      <Separator />
      <Pane $h={127}>
        <Plot>
          <Legend $y={5}>Stochastics(CL 04-19 (2/1 RnkBrs),14,21,1), Stochastics(CL 04-19 (2/1 RnkBrs),3,7,3)</Legend>
          <ChartSvg width={1050} height={127} viewBox="491 664 1050 127">
            <GuideLine x1={491} x2={1541} y1={692.3} y2={692.3} $c="#006400" $w={1} />
            <GuideLine x1={491} x2={1541} y1={726.3} y2={726.3} $c="#444444" $w={1} $dash="2 1.5" />
            <GuideLine x1={491} x2={1541} y1={761.7} y2={761.7} $c="#a00000" $w={1} />
            <Trace points={rightStoch.blue.join(' ')} $c="#1010e0" $w={1.6} />
            <Trace points={rightStoch.maroon.join(' ')} $c="#8b1010" $w={1.5} />
            <GuideLine x1={557} x2={557} y1={664} y2={791} $c="#ffffff" $w={1.3} $dash="7 4" />
            <GuideLine x1={1404.6} x2={1404.6} y1={664} y2={791} $c="#ffffff" $w={1.3} $dash="7 4" />
          </ChartSvg>
        </Plot>
        <ValueAxis>
          <AxisRow $h={23.14} $mt={-6.4} />
          {['80', '60', '40', '20', ''].map((v) => (
            <AxisRow key={v} $h={23.14}>{v}</AxisRow>
          ))}
        </ValueAxis>
      </Pane>
      <Separator />
      <Pane $h={122}>
        <Plot>
          <Legend $y={5}>MACD(CL 04-19 (2/1 RnkBrs),6,11,3)</Legend>
          <ChartSvg width={1050} height={122} viewBox="491 793 1050 122">
            <GuideLine x1={491} x2={1541} y1={851.7} y2={851.7} $c="#e6c800" $w={1} />
            <Trace points={rightMacd.red.join(' ')} $c="#b22222" $w={2} />
            <Trace points={rightMacd.blue.join(' ')} $c="#0a0af0" $w={1.8} />
            <line x1={496.4} y1={885} x2={564.3} y2={871} stroke="#0a0af0" strokeWidth={2.2} />
            <line x1={810.4} y1={902.7} x2={928.6} y2={882} stroke="#0a0af0" strokeWidth={2.2} />
            <GuideLine x1={556.5} x2={556.5} y1={793} y2={907} $c="#ffffff" $w={1.3} $dash="7 4" />
            <GuideLine x1={1403} x2={1403} y1={793} y2={907} $c="#ffffff" $w={1.3} $dash="7 4" />
          </ChartSvg>
          <Legend $y={99}>© 2019 NinjaTrader, LLC</Legend>
        </Plot>
        <ValueAxis>
          <AxisRow $h={24.2} $mt={-2.1}>0.02</AxisRow>
          {['0.01', '0', '-0.01', '-0.02'].map((v) => (
            <AxisRow key={v} $h={24.2}>{v}</AxisRow>
          ))}
        </ValueAxis>
      </Pane>
      <TimeRow $h={32}>
        <TimeAxis $pad={1}>
          {rightTimes.map((t, i) => (
            <TimeCell key={i} $w={70.93}>{t}</TimeCell>
          ))}
        </TimeAxis>
        <AxisCorner />
      </TimeRow>
      <ScrollRow $h={19}>
        <ScrollEnd $w={12} $h={17} $dir="left" />
        <ScrollThumb />
        <ScrollEnd $w={11} $h={17} $dir="right" />
      </ScrollRow>
    </ChartStack>
    <TabStrip $pad={35}>
      <Tab $w={117}>CL - 89 Tick</Tab>
      <Tab $w={116}>ES - 89 Tick</Tab>
      <Tab $w={147} $active>CL - EC Renko</Tab>
      <Tab $w={147}>ES - EC Renko</Tab>
      <TabButton $w={30} $mr={0}>+</TabButton>
    </TabStrip>
  </ChartWindow>
);

const App: React.FC = () => (
  <>
    <GlobalStyle />
    <Page>
      <LeftChart />
      <RightChart />
    </Page>
  </>
);

export default App;
